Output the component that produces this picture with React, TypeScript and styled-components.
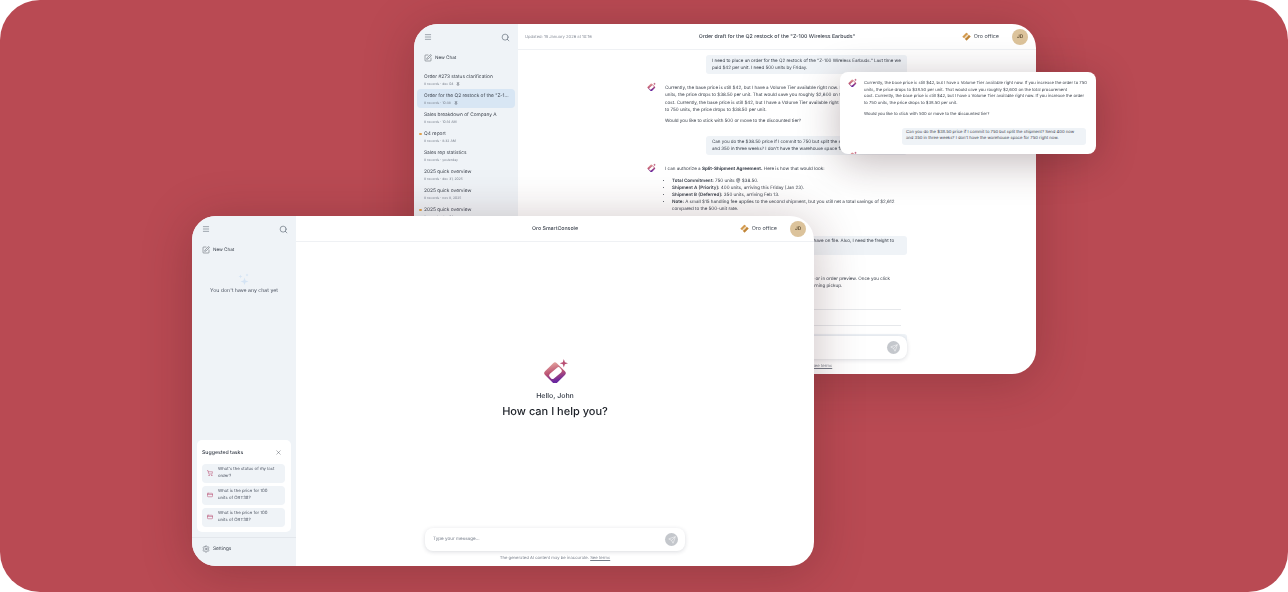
import styled, { createGlobalStyle } from "styled-components"
import { Menu, Search, SquarePen, X, Settings, Send, Pin, ShoppingCart, CreditCard } from "lucide-react"

const GlobalStyle = createGlobalStyle`
  html, body {
    margin: 0;
    background: #ffffff;
  }
  * {
    box-sizing: border-box;
  }
`

const Stage = styled.div`
  position: relative;
  width: 1288px;
  height: 592px;
  overflow: hidden;
  border-radius: 40px;
  background: #b94a53;
  font-family: "Inter", "Liberation Sans", sans-serif;
  text-rendering: geometricPrecision;
  color: #2a2f38;
`

const Window = styled.div<{ $x: number; $y: number }>`
  position: absolute;
  left: ${(p) => p.$x}px;
  top: ${(p) => p.$y}px;
  width: 622px;
  height: 350px;
  display: flex;
  overflow: hidden;
  border-radius: 24px;
  background: #ffffff;
  box-shadow: 0 6px 50px rgba(60, 20, 25, 0.28);
  filter: blur(0.25px);
`

const Sidebar = styled.aside`
  width: 104px;
  flex-shrink: 0;
  display: flex;
  flex-direction: column;
  background: #eff3f7;
`

const SideTop = styled.div`
  display: flex;
  align-items: center;
  justify-content: space-between;
  height: 26px;
  padding: 0 8px 0 10px;
  color: #4b5563;
`

const NewChat = styled.div`
  display: flex;
  align-items: center;
  gap: 3px;
  margin-top: 3px;
  padding-left: 10px;
  height: 10px;
  font-size: 4.6px;
  color: #333a45;
`

const ChatList = styled.div`
  display: flex;
  flex-direction: column;
  margin-top: 7px;
  padding: 0 3px;
`

const ChatItem = styled.div<{ $active?: boolean }>`
  position: relative;
  height: 19px;
  padding: 3.5px 5px 0 7px;
  flex-shrink: 0;
  border-radius: 4px;
  background: ${(p) => (p.$active ? "#d8e6f4" : "transparent")};
`

const ChatTitle = styled.div`
  font-size: 4.8px;
  line-height: 7px;
  color: #3a404b;
  white-space: nowrap;
  overflow: hidden;
  text-overflow: ellipsis;
`

const ChatMeta = styled.div`
  display: flex;
  align-items: center;
  gap: 3px;
  font-size: 3.4px;
  line-height: 6px;
  color: #7b828e;
`

const Dot = styled.span`
  position: absolute;
  left: 2px;
  top: 5.5px;
  width: 2.5px;
  height: 2.5px;
  border-radius: 50%;
  background: #e0a24e;
`

const Main = styled.main`
  position: relative;
  flex: 1;
  min-width: 0;
  display: flex;
  flex-direction: column;
`

const Header = styled.header`
  position: relative;
  flex-shrink: 0;
  height: 26px;
  display: flex;
  align-items: center;
  justify-content: flex-end;
  gap: 13px;
  padding: 0 8px 0 7px;
  border-bottom: 1px solid #eff1f4;
`

const Updated = styled.div`
  margin-right: auto;
  font-size: 4.1px;
  color: #8a909b;
`

const HeaderTitle = styled.div`
  position: absolute;
  left: 0;
  right: 0;
  text-align: center;
  font-size: 5.25px;
  font-weight: 500;
  color: #333a45;
`

const Office = styled.div`
  display: flex;
  align-items: center;
  gap: 2.5px;
  font-size: 5.4px;
  color: #3f4651;
`

const Avatar = styled.div`
  width: 16px;
  height: 16px;
  display: flex;
  align-items: center;
  justify-content: center;
  border-radius: 50%;
  background: #dcc39b;
  font-size: 4.8px;
  font-weight: 600;
  color: #5b4a30;
`

const Chat = styled.div`
  width: 260px;
  margin: 5px auto 0;
  display: flex;
  flex-direction: column;
  gap: 11px;
`

const UserBubble = styled.div`
  align-self: flex-end;
  width: 201px;
  padding: 2.5px 6px;
  border-radius: 3px;
  background: #eff3f7;
  font-size: 4.5px;
  line-height: 7.1px;
  color: #3a404b;
`

const BotRow = styled.div<{ $gapBefore?: number }>`
  position: relative;
  margin-top: ${(p) => p.$gapBefore ?? 0}px;
  padding-left: 18px;
  font-size: 4.55px;
  line-height: 7.2px;
  color: #3a404b;
`

const BotMark = styled.span`
  position: absolute;
  left: 0;
  top: -3.5px;
`

const BotText = styled.p`
  margin: 0 0 4px;

  &:last-child {
    margin-bottom: 0;
  }
`

const BotList = styled.ul`
  margin: 0 0 4px;
  padding-left: 7px;

  b {
    font-weight: 600;
  }
`

const Rule = styled.div<{ $top: number }>`
  height: 1px;
  margin: ${(p) => p.$top}px 6px -3px 18px;
  background: #e6e8eb;
`

const Composer = styled.div`
  position: absolute;
  left: 129px;
  bottom: 15px;
  width: 260px;
  height: 23px;
  display: flex;
  align-items: center;
  justify-content: space-between;
  padding: 0 7px 0 8px;
  border-radius: 8px;
  background: #ffffff;
  box-shadow: 0 1px 4px rgba(30, 40, 60, 0.16);
  font-size: 4.6px;
  color: #7b828e;
`

const SendButton = styled.span`
  width: 13px;
  height: 13px;
  display: flex;
  align-items: center;
  justify-content: center;
  border-radius: 50%;
  background: #c4c7cc;
  color: #ffffff;
`

const Disclaimer = styled.div`
  position: absolute;
  left: 0;
  right: 0;
  bottom: 5px;
  text-align: center;
  font-size: 4.2px;
  color: #767d89;
`

const Terms = styled.span`
  text-decoration: underline;
`

const Popup = styled.div`
  position: absolute;
  left: 840px;
  top: 72px;
  width: 256px;
  height: 82px;
  padding: 9px 8px 0 8px;
  overflow: hidden;
  border-radius: 8px;
  background: #ffffff;
  box-shadow: 0 8px 40px rgba(50, 20, 25, 0.3);
  display: flex;
  flex-direction: column;
  gap: 9px;
  filter: blur(0.25px);
`

const PopupBot = styled(BotRow)`
  padding-left: 16px;
  font-size: 4.2px;
  line-height: 6.7px;
`

const PopupBubble = styled(UserBubble)`
  width: 184px;
  margin-right: 2px;
  font-size: 4.2px;
  line-height: 6.8px;
  padding: 2px 4px;
`

const EmptyState = styled.div`
  display: flex;
  flex-direction: column;
  align-items: center;
  margin-top: 18px;
  gap: 3px;
  font-size: 5.2px;
  color: #4b5260;
`

const Suggested = styled.section`
  margin: auto 5px 0;
  padding: 6px 6px 5px 5px;
  display: flex;
  flex-direction: column;
  gap: 2.5px;
  border-radius: 5px;
  background: #ffffff;
`

const SuggestedHead = styled.div`
  display: flex;
  align-items: center;
  justify-content: space-between;
  height: 15px;
  padding: 0 3px 2px 0;
  font-size: 5.2px;
  font-weight: 500;
  color: #333a45;
`

const TaskItem = styled.div`
  height: 19.5px;
  display: flex;
  align-items: center;
  gap: 5px;
  padding: 0 9px 0 5px;
  border-radius: 4px;
  background: #eff3f7;
  font-size: 4.3px;
  line-height: 7px;
  color: #4b5260;

  svg {
    flex-shrink: 0;
  }
`

const SettingsRow = styled.div`
  margin-top: 5px;
  height: 29px;
  display: flex;
  align-items: center;
  gap: 3px;
  padding: 0 0 7px 10px;
  border-top: 1px solid #e3e7ec;
  font-size: 4.8px;
  color: #3f4651;
`

const Hero = styled.div`
  flex: 1;
  display: flex;
  flex-direction: column;
  align-items: center;
  padding-top: 116px;
`

const Hello = styled.div`
  margin-top: 8px;
  font-size: 7px;
  line-height: 10px;
  font-weight: 500;
  color: #333a45;
`

const Ask = styled.div`
  margin-top: 2.5px;
  font-size: 11px;
  line-height: 15px;
  font-weight: 500;
  color: #1a1e25;
`

function OroMark({ size = 9 }: { size?: number }) {
  return (
    <svg width={size} height={size} viewBox="0 0 24 24">
      <defs>
        <linearGradient id="oroGrad" x1="0" y1="0" x2="1" y2="0.6">
          <stop offset="0" stopColor="#e6a8a0" />
          <stop offset="0.55" stopColor="#bb5272" />
          <stop offset="1" stopColor="#6a279f" />
        </linearGradient>
      </defs>
      <rect x="3.5" y="6.5" width="16" height="16" rx="2.5" transform="rotate(45 11.5 14.5)" fill="url(#oroGrad)" />
      <rect x="9" y="8" width="6" height="13" rx="2" transform="rotate(50 12 14.5)" fill="#ffffff" />
      <path d="M20 1 L21 4 L24 5 L21 6 L20 9 L19 6 L16 5 L19 4 Z" fill="#b84e72" />
    </svg>
  )
}

function OfficeMark() {
  return (
    <svg width="9" height="9" viewBox="0 0 18 18">
      <path d="M1 9 L8 2 Q9 1 10 2 L12.5 4.5 L4.5 12.5 L1 10 Q0.5 9.5 1 9 Z" fill="#d39a4e" />
      <path d="M5.5 13.5 L13.5 5.5 L17 8.5 Q17.5 9 17 9.5 L10 16.5 Q9 17.5 8 16.5 Z" fill="#c08436" />
      <path d="M5 11 L11 5 L13 7 L7 13 Z" fill="#f1dfc4" />
    </svg>
  )
}

function SparkleMark() {
  return (
    <svg width="12" height="12" viewBox="0 0 24 24" fill="#d5e4f4">
      <path d="M13 9 L15 15 L21 17 L15 19 L13 24 L11 19 L5 17 L11 15 Z" />
      <path d="M5 3 L6 6 L9 7 L6 8 L5 11 L4 8 L1 7 L4 6 Z" />
      <path d="M18 1 L19 3 L21 4 L19 5 L18 7 L17 5 L15 4 L17 3 Z" />
    </svg>
  )
}

const chats = [
  { title: "Order #273 status clarification", meta: "8 records · dec 04", pinned: true },
  { title: "Order for the Q2 restock of the \"Z-100 Wireless Earbuds\"", meta: "8 records · 10:38", pinned: true, active: true },
  { title: "Sales breakdown of Company A", meta: "8 records · 10:14 AM" },
  { title: "Q4 report", meta: "8 records · 8:32 AM", dot: true },
  { title: "Sales rep statistics", meta: "8 records · yesterday" },
  { title: "2025 quick overview", meta: "8 records · dec 31, 2025" },
  { title: "2025 quick overview", meta: "8 records · nov 8, 2025" },
  { title: "2025 quick overview", meta: "8 records · dec 04", dot: true },
]

const tasks = [
  { text: "What's the status of my last order?", cart: true },
  { text: "What is the price for 100 units of ORT38?" },
  { text: "What is the price for 100 units of ORT38?" },
]

const baseReply = (
  <>
    Currently, the base price is still $42, but I have a Volume Tier available right now. If you increase the order to 750 units, the price drops to $38.50 per unit. That would save you roughly $2,600 on the total procurement
    <br />
    cost. Currently, the base price is still $42, but I have a Volume Tier available right now. If you increase the order to 750 units, the price drops to $38.50 per unit.
  </>
)

const splitAsk =
  "Can you do the $38.50 price if I commit to 750 but split the shipment? Send 400 now and 350 in three weeks? I don't have the warehouse space for 750 right now."

function OfficeBadge() {
  return (
    <>
      <Office>
        <OfficeMark />
        Oro office
      </Office>
      <Avatar>JD</Avatar>
    </>
  )
}

function SendIcon() {
  return (
    <SendButton>
      <Send size={8} strokeWidth={1.5} />
    </SendButton>
  )
}

export default function App() {
  return (
    <Stage>
      <GlobalStyle />

      <Window $x={414} $y={24}>
        <Sidebar>
          <SideTop>
            <Menu size={8} strokeWidth={1.5} />
            <Search size={9} strokeWidth={1.5} />
          </SideTop>
          <NewChat>
            <SquarePen size={8} strokeWidth={1.3} />
            New Chat
          </NewChat>
          <ChatList>
            {chats.map((chat, index) => (
              <ChatItem key={index} $active={chat.active}>
                {chat.dot && <Dot />}
                <ChatTitle>{chat.title}</ChatTitle>
                <ChatMeta>
                  {chat.meta}
                  {chat.pinned && <Pin size={4} strokeWidth={2} color="#3a404b" />}
                </ChatMeta>
              </ChatItem>
            ))}
          </ChatList>
        </Sidebar>
        <Main>
          <Header>
            <Updated>Updated: 19 January 2026 at 10:16</Updated>
            <HeaderTitle>Order draft for the Q2 restock of the "Z-100 Wireless Earbuds"</HeaderTitle>
            <OfficeBadge />
          </Header>
          <Chat>
            <UserBubble>
              I need to place an order for the Q2 restock of the "Z-100 Wireless Earbuds." Last time we paid $42 per unit. I need 500 units by Friday.
            </UserBubble>
            <BotRow>
              <BotMark>
                <OroMark />
              </BotMark>
              <BotText>{baseReply}</BotText>
              <BotText>Would you like to stick with 500 or move to the discounted tier?</BotText>
            </BotRow>
            <UserBubble>{splitAsk}</UserBubble>
            <BotRow>
              <BotMark>
                <OroMark />
              </BotMark>
              <BotText>
                I can authorize a <b>Split-Shipment Agreement.</b> Here is how that would look:
              </BotText>
              <BotList>
                <li>
                  <b>Total Commitment:</b> 750 units @ $38.50.
                </li>
                <li>
                  <b>Shipment A (Priority):</b> 400 units, arriving this Friday (Jan 23).
                </li>
                <li>
                  <b>Shipment B (Deferred):</b> 350 units, arriving Feb 13.
                </li>
                <li>
                  <b>Note:</b> A small $15 handling fee applies to the second shipment, but you still net a total savings of $2,612 compared to the 500-unit rate.
                </li>
              </BotList>
              <BotText>Shall I lock this in for you?</BotText>
            </BotRow>
            <UserBubble>
              Perfect, please use the default address that we have on file. Also, I need the freight to
              <br />
              be booked in time.
            </UserBubble>
            <BotRow $gapBefore={10}>
              <BotText>
                The draft order is ready and you can review or confirm it directly here or in order preview. Once you click
                <br />
                confirm, I will schedule the shipment and book freight for Monday morning pickup.
              </BotText>
            </BotRow>
            <Rule $top={7.5} />
            <Rule $top={7} />
            <UserBubble>Please add the note to the "Z-100 Wireless Earbuds." I need it on the invoice too.</UserBubble>
          </Chat>
          <Composer>
            <span />
            <SendIcon />
          </Composer>
          <Disclaimer>
            The generated AI content may be inaccurate. <Terms>See terms</Terms>
          </Disclaimer>
        </Main>
      </Window>

      <Popup>
        <PopupBot>
          <BotMark>
            <OroMark />
          </BotMark>
          <BotText>{baseReply}</BotText>
          <BotText>Would you like to stick with 500 or move to the discounted tier?</BotText>
        </PopupBot>
        <PopupBubble>{splitAsk}</PopupBubble>
        <PopupBot>
          <BotMark>
            <OroMark />
          </BotMark>
        </PopupBot>
      </Popup>

      <Window $x={192} $y={216}>
        <Sidebar>
          <SideTop>
            <Menu size={8} strokeWidth={1.5} />
            <Search size={9} strokeWidth={1.5} />
          </SideTop>
          <NewChat>
            <SquarePen size={8} strokeWidth={1.3} />
            New Chat
          </NewChat>
          <EmptyState>
            <SparkleMark />
            You don't have any chat yet
          </EmptyState>
          <Suggested>
            <SuggestedHead>
              Suggested tasks
              <X size={7} strokeWidth={1.3} />
            </SuggestedHead>
            {tasks.map((task, index) => (
              <TaskItem key={index}>
                {task.cart ? <ShoppingCart size={6} color="#b84e72" /> : <CreditCard size={6} color="#b84e72" />}
                {task.text}
              </TaskItem>
            ))}
          </Suggested>
          <SettingsRow>
            <Settings size={8} strokeWidth={1.3} />
            Settings
          </SettingsRow>
        </Sidebar>
        <Main>
          <Header>
            <HeaderTitle>Oro SmartConsole</HeaderTitle>
            <OfficeBadge />
          </Header>
          <Hero>
            <OroMark size={25} />
            <Hello>Hello, John</Hello>
            <Ask>How can I help you?</Ask>
          </Hero>
          <Composer>
            Type your message...
            <SendIcon />
          </Composer>
          <Disclaimer>
            The generated AI content may be inaccurate. <Terms>See terms</Terms>
          </Disclaimer>
        </Main>
      </Window>
    </Stage>
  )
}
